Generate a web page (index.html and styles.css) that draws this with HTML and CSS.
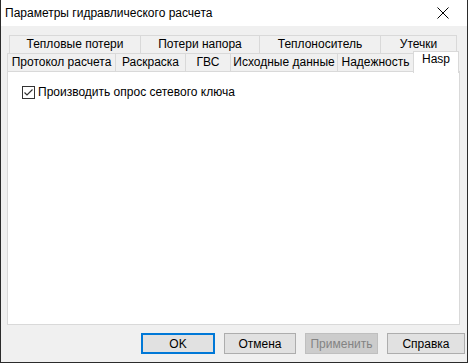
FILE: index.html
```html
<!DOCTYPE html>
<html>
<head>
<meta charset="utf-8">
<link rel="stylesheet" href="styles.css">
</head>
<body>
<div class="window">
  <div class="titlebar">
    <span class="title">Параметры гидравлического расчета</span>
    <svg class="close" width="12" height="12" viewBox="0 0 12 12"><path d="M0.5 0.5 L11.5 11.5 M11.5 0.5 L0.5 11.5" stroke="#000" stroke-width="1" fill="none"/></svg>
  </div>
  <div class="client">
    <div class="tabs">
      <div class="row row1">
        <div class="tab t11">Тепловые потери</div>
        <div class="tab t12">Потери напора</div>
        <div class="tab t13">Теплоноситель</div>
        <div class="tab t14 last">Утечки</div>
      </div>
      <div class="row row2">
        <div class="tab t21">Протокол расчета</div>
        <div class="tab t22">Раскраска</div>
        <div class="tab t23">ГВС</div>
        <div class="tab t24">Исходные данные</div>
        <div class="tab t25">Надежность</div>
        <div class="tab t26 selected">Hasp</div>
      </div>
      <div class="panel">
        <label class="check">
          <span class="box"><svg width="11" height="11" viewBox="0 0 11 11"><path d="M1.5 5.5 L4 8 L9.5 2.5" stroke="#333" stroke-width="1.2" fill="none"/></svg></span>
          <span class="label">Производить опрос сетевого ключа</span>
        </label>
      </div>
    </div>
    <div class="buttons">
      <div class="btn default b1">OK</div>
      <div class="btn b2">Отмена</div>
      <div class="btn disabled b3">Применить</div>
      <div class="btn b4">Справка</div>
    </div>
  </div>
</div>
</body>
</html>
```
FILE: styles.css
```css
html, body {
  margin: 0;
  padding: 0;
  background: #f0f0f0;
}
body {
  font-family: "Liberation Sans", Arial, sans-serif;
  font-size: 12px;
  color: #000;
}
.window {
  width: 468px;
  height: 363px;
  box-sizing: border-box;
  border: 1px solid #2b2b2b;
  border-top: none;
  display: flex;
  flex-direction: column;
  background: #f0f0f0;
}
.titlebar {
  height: 26px;
  background: #fff;
  display: flex;
  align-items: center;
  justify-content: space-between;
  padding: 0 18px 0 4px;
  flex: none;
}
.title {
  font-size: 12px;
  margin-top: -1px;
}
.close {
  display: block;
  margin-top: -1px;
}
.client {
  flex: 1;
  display: flex;
  flex-direction: column;
  padding: 9px 0 0 6px;
}
.tabs {
  display: flex;
  flex-direction: column;
}
.row {
  display: flex;
  height: 18px;
}
.row1 {
  margin-left: 2px;
}
.tab {
  box-sizing: border-box;
  height: 19px;
  border: 1px solid #d9d9d9;
  border-right: none;
  border-bottom: none;
  background: #f0f0f0;
  text-align: center;
  line-height: 17px;
  white-space: nowrap;
  color: #000;
}
.tab.last {
  border-right: 1px solid #d9d9d9;
}
.t11 { width: 131px; }
.t12 { width: 119px; }
.t13 { width: 121px; }
.t14 { width: 77px; }
.t21 { width: 108px; }
.t22 { width: 70px; }
.t23 { width: 45px; }
.t24 { width: 107px; }
.t25 { width: 76px; }
.t26 { width: 46px; }
.tab.selected {
  background: #fff;
  border-right: 1px solid #d9d9d9;
  height: 22px;
  margin-top: -2px;
  line-height: 15px;
  position: relative;
  z-index: 2;
}
.panel {
  box-sizing: border-box;
  width: 453px;
  height: 254px;
  background: #fff;
  border: 1px solid #d9d9d9;
  position: relative;
  z-index: 1;
  padding: 13px 0 0 14px;
}
.check {
  display: flex;
  align-items: center;
}
.box {
  box-sizing: border-box;
  width: 13px;
  height: 13px;
  border: 1px solid #333;
  background: #fff;
  display: flex;
  align-items: center;
  justify-content: center;
}
.box svg {
  display: block;
}
.label {
  margin-left: 3px;
}
.buttons {
  display: flex;
  justify-content: flex-end;
  margin-top: 8px;
  padding-right: 2px;
  gap: 9px;
}
.btn {
  box-sizing: border-box;
  height: 21px;
  border: 1px solid #adadad;
  background: #e1e1e1;
  display: flex;
  align-items: center;
  justify-content: center;
}
.btn.default {
  border: 2px solid #0078d7;
}
.btn.disabled {
  background: #cccccc;
  border-color: #bfbfbf;
  color: #838383;
}
.b1 { width: 74px; }
.b2 { width: 72px; }
.b3 { width: 73px; }
.b4 { width: 78px; }
```
